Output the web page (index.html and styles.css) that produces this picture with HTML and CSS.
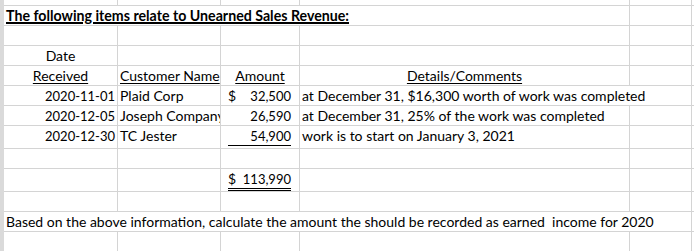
FILE: index.html
```html
<!DOCTYPE html>
<html>
<head>
<meta charset="utf-8">
<link rel="stylesheet" href="styles.css">
</head>
<body>
<div class="frame">
  <div class="sheet">
    <!-- row 0 -->
    <div class="c"></div><div class="c"></div><div class="c"></div><div class="c"></div><div class="c"></div><div class="c f"></div>
    <!-- row 1 -->
    <div class="c span4 title">The following items relate to Unearned Sales Revenue:</div><div class="c"></div><div class="c f"></div>
    <!-- row 2 -->
    <div class="c"></div><div class="c"></div><div class="c"></div><div class="c"></div><div class="c"></div><div class="c f"></div>
    <!-- row 3 -->
    <div class="c center">Date</div><div class="c"></div><div class="c"></div><div class="c"></div><div class="c"></div><div class="c f"></div>
    <!-- row 4 -->
    <div class="c center"><span class="ul">Received</span></div>
    <div class="c"><span class="ul">Customer Name</span></div>
    <div class="c center"><span class="ul">Amount</span></div>
    <div class="c center"><span class="ul">Details/Comments</span></div>
    <div class="c"></div><div class="c f"></div>
    <!-- row 5 -->
    <div class="c right num">2020-11-01</div>
    <div class="c">Plaid Corp</div>
    <div class="c"><span class="acct"><span>$</span><span class="num">32,500</span></span></div>
    <div class="c span2">at December 31, $16,300 worth of work was completed</div>
    <div class="c f"></div>
    <!-- row 6 -->
    <div class="c right num">2020-12-05</div>
    <div class="c">Joseph Company</div>
    <div class="c"><span class="acct"><span></span><span class="num">26,590</span></span></div>
    <div class="c">at December 31, 25% of the work was completed</div>
    <div class="c"></div><div class="c f"></div>
    <!-- row 7 -->
    <div class="c right num">2020-12-30</div>
    <div class="c">TC Jester</div>
    <div class="c"><span class="acct single"><span></span><span class="num">54,900</span></span></div>
    <div class="c">work is to start on January 3, 2021</div>
    <div class="c"></div><div class="c f"></div>
    <!-- row 8 -->
    <div class="c"></div><div class="c"></div><div class="c"></div><div class="c"></div><div class="c"></div><div class="c f"></div>
    <!-- row 9 -->
    <div class="c"></div><div class="c"></div>
    <div class="c"><span class="acct double"><span>$</span><span class="num">113,990</span></span></div>
    <div class="c"></div><div class="c"></div><div class="c f"></div>
    <!-- row 10 -->
    <div class="c"></div><div class="c"></div><div class="c"></div><div class="c"></div><div class="c"></div><div class="c f"></div>
    <!-- row 11 -->
    <div class="c span5">Based on the above information, calculate the amount the should be recorded as earned&nbsp; income for 2020</div>
    <div class="c f"></div>
    <!-- row 12 -->
    <div class="c"></div><div class="c"></div><div class="c"></div><div class="c"></div><div class="c"></div><div class="c f"></div>
  </div>
</div>
</body>
</html>
```

FILE: styles.css
```css
html, body {
  margin: 0;
  padding: 0;
  background: #ffffff;
}

.frame {
  width: 694px;
  height: 251px;
  overflow: hidden;
  border-left: 4px solid #dadada;
  box-sizing: border-box;
}

.sheet {
  display: grid;
  grid-template-columns: 114px 103px 79px 330px 62px 2px;
  grid-template-rows: 6px 20px 20px 20px 20px 20px 20px 23px 20px 23px 20px 20px 20px;
  font-family: "Lato", "Liberation Sans", sans-serif;
  font-size: 14px;
  line-height: 18px;
  color: #000000;
}

.c {
  box-sizing: border-box;
  border-right: 1px solid #d4d4d4;
  border-bottom: 1px solid #d4d4d4;
  padding: 1px 2px 0;
  white-space: nowrap;
  overflow: hidden;
}

.f {
  border-right: none;
}

.span2 { grid-column: span 2; }
.span4 { grid-column: span 4; }
.span5 { grid-column: span 5; }

.center { text-align: center; }
.right { text-align: right; }

.num {
  font-size: 13px;
  letter-spacing: 0;
}

.title {
  font-weight: bold;
  font-size: 14.2px;
  text-decoration: underline;
  text-decoration-thickness: 2px;
  text-underline-offset: 1px;
}

.ul {
  text-decoration: underline;
  text-decoration-thickness: 1px;
  text-underline-offset: 2px;
}

.acct {
  display: flex;
  justify-content: space-between;
  margin: 0 6px 0 5px;
}

.single {
  border-bottom: 1px solid #000000;
}

.double {
  border-bottom: 3px double #000000;
}
```
